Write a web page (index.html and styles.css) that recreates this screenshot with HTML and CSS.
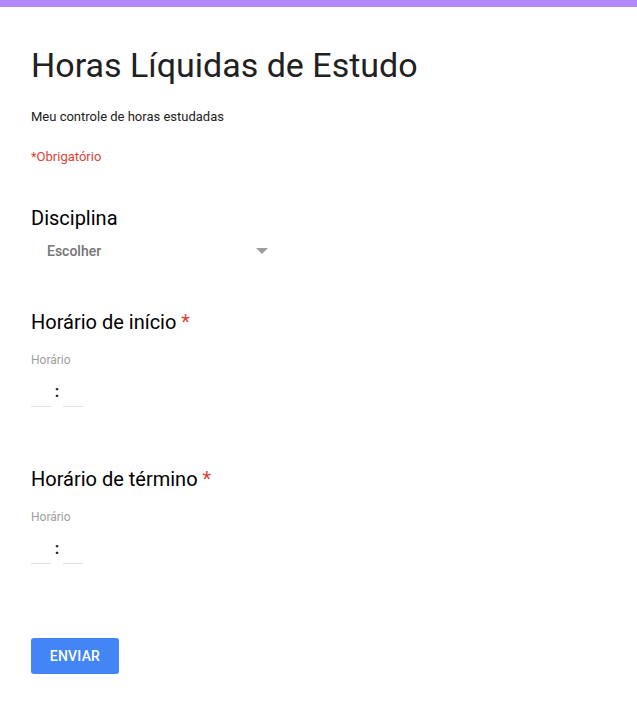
FILE: index.html
```html
<!DOCTYPE html>
<html lang="pt">
<head>
<meta charset="utf-8">
<title>Horas Líquidas de Estudo</title>
<link rel="stylesheet" href="styles.css">
</head>
<body>
<div class="topbar"></div>
<main class="form">
  <header class="form-header">
    <h1 class="title">Horas Líquidas de Estudo</h1>
    <p class="desc">Meu controle de horas estudadas</p>
    <p class="required-note">*Obrigatório</p>
  </header>

  <section class="question q-select">
    <h2 class="q-title">Disciplina</h2>
    <div class="select">
      <span class="select-text">Escolher</span>
      <span class="select-arrow"></span>
    </div>
  </section>

  <section class="question q-time">
    <h2 class="q-title">Horário de início <span class="star">*</span></h2>
    <div class="time-label">Horário</div>
    <div class="time">
      <span class="time-field"></span>
      <span class="colon">:</span>
      <span class="time-field"></span>
    </div>
  </section>

  <section class="question q-time">
    <h2 class="q-title">Horário de término <span class="star">*</span></h2>
    <div class="time-label">Horário</div>
    <div class="time">
      <span class="time-field"></span>
      <span class="colon">:</span>
      <span class="time-field"></span>
    </div>
  </section>

  <div class="actions">
    <button class="submit" type="button">ENVIAR</button>
  </div>
</main>
</body>
</html>
```
FILE: styles.css
```css
* { box-sizing: border-box; }
html, body { margin: 0; padding: 0; background: #fff; }
body { font-family: Roboto, "Noto Sans", Arial, sans-serif; color: #202124; }

.topbar { height: 7px; background: #b388ff; }

.form { padding: 0 31px; }

.form-header { padding-top: 36px; }
.title {
  margin: 0;
  font-size: 34px;
  font-weight: 400;
  line-height: 44px;
  color: #212121;
}
.desc {
  margin: 20px 0 0;
  font-size: 13px;
  line-height: 20px;
  color: #212121;
}
.required-note {
  margin: 20px 0 0;
  font-size: 13px;
  line-height: 20px;
  color: #db4437;
}

.question { margin-top: 37px; }
.q-title {
  margin: 0;
  font-size: 20px;
  font-weight: 400;
  line-height: 28px;
  color: #000;
}
.star { color: #db4437; }

.select {
  display: flex;
  align-items: center;
  width: 240px;
  height: 28px;
  margin-top: 5px;
  padding-left: 16px;
}
.select-text { flex: 1; font-size: 14px; font-weight: 500; color: #757575; }
.select-arrow {
  width: 0; height: 0;
  border-left: 6px solid transparent;
  border-right: 6px solid transparent;
  border-top: 6px solid #9e9e9e;
  margin-right: 3px;
}

.q-time { margin-top: 43px; }
.q-time + .q-time { margin-top: 58px; }
.time-label {
  margin-top: 16px;
  font-size: 12px;
  line-height: 16px;
  color: #9e9e9e;
}
.time {
  display: flex;
  align-items: flex-end;
  gap: 4px;
  margin-top: 15px;
  height: 24px;
}
.time-field {
  width: 20px;
  height: 1px;
  background: #e0e0e0;
}
.colon {
  font-size: 16px;
  font-weight: 700;
  line-height: 20px;
  color: #212121;
  margin-bottom: 5px;
  width: 4px;
  display: flex; justify-content: center;
}

.actions { margin-top: 74px; }
.submit {
  width: 88px;
  height: 36px;
  border: 0;
  border-radius: 3px;
  background: #4285f4;
  color: #fff;
  font-family: Roboto, Arial, sans-serif;
  font-size: 14px;
  font-weight: 500;
  letter-spacing: 0.2px;
  padding: 0;
}
```
